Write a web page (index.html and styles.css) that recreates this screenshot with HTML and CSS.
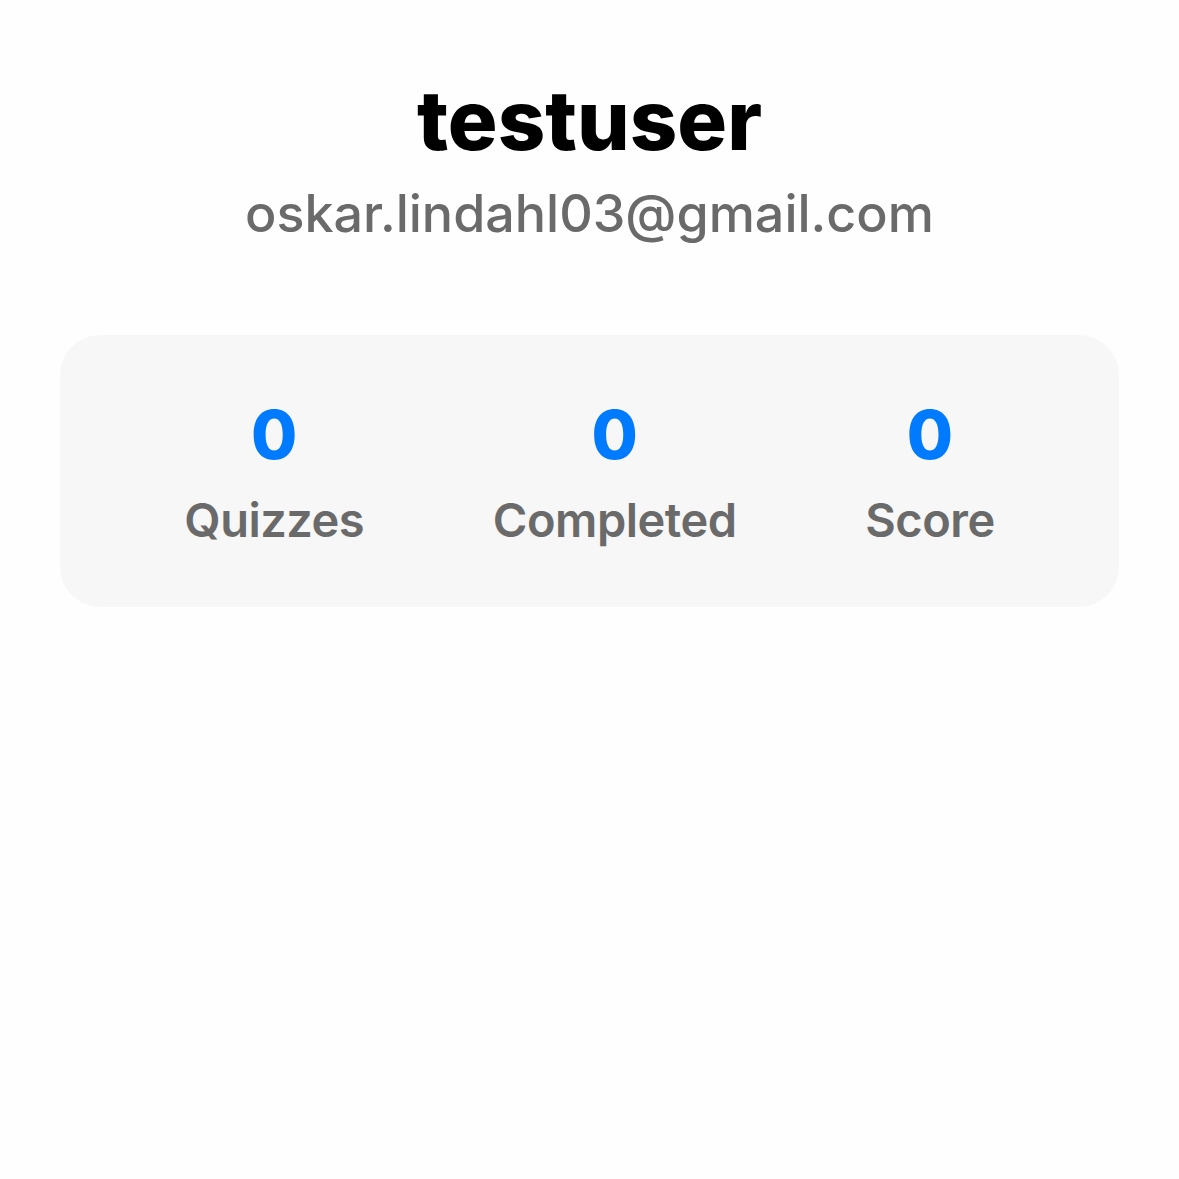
FILE: index.html
```html
<!DOCTYPE html>
<html>
<head>
<meta charset="utf-8">
<link rel="stylesheet" href="styles.css">
</head>
<body>
<main class="profile">
  <header class="head">
    <h1 class="name">testuser</h1>
    <p class="email">oskar.lindahl03@gmail.com</p>
  </header>
  <section class="stats">
    <div class="stat"><div class="num">0</div><div class="label">Quizzes</div></div>
    <div class="stat"><div class="num">0</div><div class="label">Completed</div></div>
    <div class="stat"><div class="num">0</div><div class="label">Score</div></div>
  </section>
</main>
</body>
</html>
```
FILE: styles.css
```css
html, body {
  margin: 0;
  padding: 0;
  background: #fefefe;
}
body {
  font-family: Inter, "Noto Sans", sans-serif;
  width: 1179px;
  height: 1179px;
}
.profile {
  padding: 72px 60px 0 60px;
  display: flex;
  flex-direction: column;
}
.head {
  display: flex;
  flex-direction: column;
  align-items: center;
}
.name {
  margin: 0;
  font-size: 83px;
  font-weight: 800;
  line-height: 96px;
  color: #000;
  letter-spacing: 0;
}
.email {
  margin: 15px 0 0 0;
  font-size: 52px;
  line-height: 62px;
  font-weight: 500;
  color: #6a6a6a;
}
.stats {
  margin-top: 90px;
  background: #f7f7f7;
  border-radius: 40px;
  padding: 60px 60px 56px;
  display: flex;
  justify-content: space-around;
}
.stat {
  display: flex;
  flex-direction: column;
  align-items: center;
}
.num {
  font-size: 67px;
  line-height: 80px;
  font-weight: 800;
  color: #007aff;
}
.label {
  margin-top: 14px;
  font-size: 47px;
  line-height: 62px;
  font-weight: 600;
  color: #6a6a6a;
  letter-spacing: -0.5px;
}
```
